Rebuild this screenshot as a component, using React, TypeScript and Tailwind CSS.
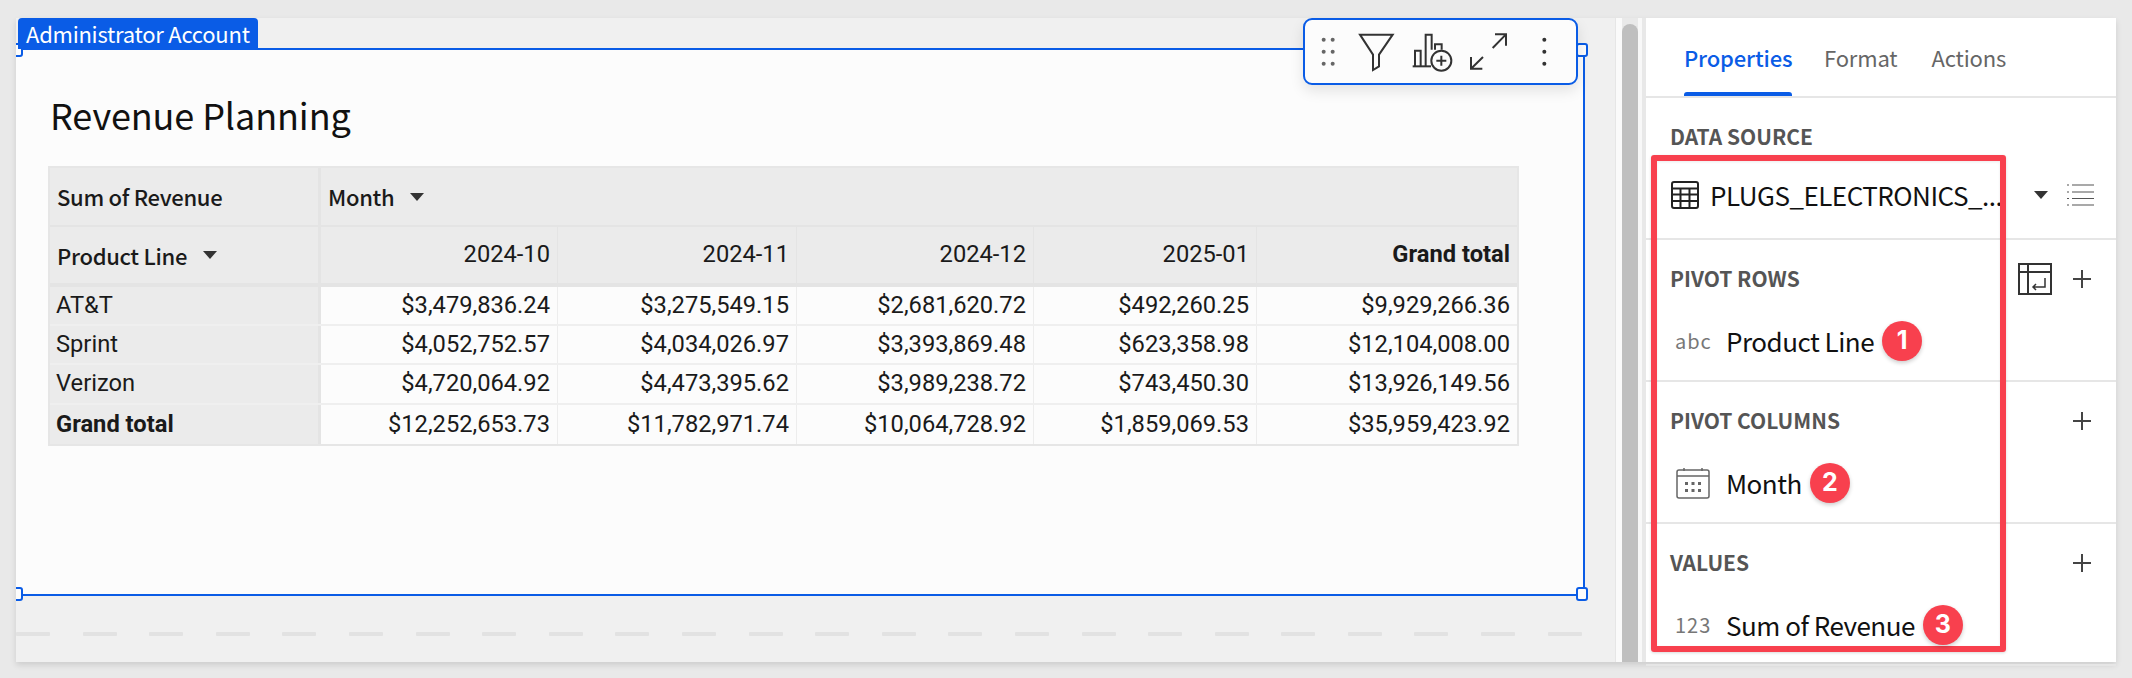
const SANS = "font-['Noto_Sans_CJK_JP',sans-serif]";

const columns = ["2024-10", "2024-11", "2024-12", "2025-01"];
const colW = ["w-[237px]", "w-[239px]", "w-[237px]", "w-[223px]"];
const rows = [
  { name: "AT&T", h: "h-[39px]", v: ["$3,479,836.24", "$3,275,549.15", "$2,681,620.72", "$492,260.25", "$9,929,266.36"] },
  { name: "Sprint", h: "h-[39px]", v: ["$4,052,752.57", "$4,034,026.97", "$3,393,869.48", "$623,358.98", "$12,104,008.00"] },
  { name: "Verizon", h: "h-[40px]", v: ["$4,720,064.92", "$4,473,395.62", "$3,989,238.72", "$743,450.30", "$13,926,149.56"] },
  { name: "Grand total", h: "h-[39px]", bold: true, v: ["$12,252,653.73", "$11,782,971.74", "$10,064,728.92", "$1,859,069.53", "$35,959,423.92"] },
];

function Caret({ className = "" }: { className?: string }) {
  return (
    <svg width="14" height="8" viewBox="0 0 14 8" className={className}>
      <path d="M0 0H14L7 8Z" fill="#333" />
    </svg>
  );
}

function Handle({ className }: { className: string }) {
  return <div className={`absolute w-[12px] h-[14px] rounded-[3px] border-2 border-[#0a5ce6] bg-[#fcfcfc] ${className}`} />;
}

function PivotTable() {
  return (
    <div className="w-[1471px] border-2 border-[#e6e6e6] font-['Roboto',sans-serif] text-[#1a1a1a]">
      <div className="flex h-[59px] bg-[#ebebeb] border-b-2 border-[#e4e4e4]">
        <div className={`${SANS} w-[271px] border-r-[3px] border-[#e4e4e4] pl-[7px] flex items-center text-[22px] tracking-[-0.3px] font-medium`}>Sum of Revenue</div>
        <div className={`${SANS} flex-1 pl-[7px] flex items-center text-[22px] tracking-[-0.3px] font-medium`}>
          Month
          <Caret className="ml-[16px]" />
        </div>
      </div>
      <div className="flex h-[60px] bg-[#ebebeb] border-b-4 border-[#e4e4e4]">
        <div className={`${SANS} w-[271px] border-r-[3px] border-[#e4e4e4] pl-[7px] flex items-center text-[22px] tracking-[-0.3px] font-medium`}>
          Product Line
          <Caret className="ml-[16px]" />
        </div>
        {columns.map((c, i) => (
          <div key={c} className={`${colW[i]} border-r border-[#e4e4e4] pr-[7px] flex items-center justify-end text-[23.7px]`}>{c}</div>
        ))}
        <div className="flex-1 pr-[7px] flex items-center justify-end text-[23.7px] font-bold">Grand total</div>
      </div>
      {rows.map((r, ri) => (
        <div key={r.name} className={`flex ${r.h} ${ri < 3 ? "border-b-2 border-[#efefef]" : ""}`}>
          <div className={`w-[271px] bg-[#ebebeb] border-r-[3px] border-[#e4e4e4] pl-[6px] flex items-center text-[23.7px] ${r.bold ? "font-bold" : ""}`}>{r.name}</div>
          {r.v.map((val, i) => (
            <div key={i} className={`${i < 4 ? colW[i] + " border-r border-[#ededed]" : "flex-1"} bg-[#fcfcfc] pr-[7px] flex items-center justify-end text-[23.7px]`}>{val}</div>
          ))}
        </div>
      ))}
    </div>
  );
}

function Toolbar() {
  return (
    <div className="absolute left-[1287px] top-0 z-10 w-[275px] h-[67px] rounded-[9px] border-2 border-[#0a5ce6] bg-[#fcfcfc] shadow-[0_6px_14px_rgba(0,0,0,0.10)]">
      <svg width="275" height="67" viewBox="68 55 825 201" className="absolute left-[-2px] top-[-2px]" fill="none">
        <g fill="#666">
          {[130, 157].map((x) => [120, 156, 192].map((y) => <circle key={`${x}${y}`} cx={x} cy={y} r="6" />))}
        </g>
        <path d="M239 105H337L296 165V200L278 211V165Z" stroke="#333" strokeWidth="6" strokeLinejoin="miter" />
        <g stroke="#333" strokeWidth="6">
          <path d="M397 200H452" />
          <path d="M404 200V153H421V200" />
          <path d="M436 200V105H454V150" />
          <path d="M464 150V134H484V150" />
          <circle cx="483" cy="183" r="30" />
          <path d="M483 168V198M468 183H498" />
        </g>
        <g stroke="#333" strokeWidth="6">
          <path d="M637 145L677 104M644 104H677V138" />
          <path d="M608 172L572 207M572 172V207H606" />
        </g>
        <g fill="#333">
          <circle cx="792" cy="120" r="6" />
          <circle cx="792" cy="156" r="6" />
          <circle cx="792" cy="192" r="6" />
        </g>
      </svg>
    </div>
  );
}

function Canvas() {
  return (
    <div className="relative w-[1599px] h-full overflow-hidden bg-[#f0f0f0]">
      <div className={`${SANS} absolute left-[2px] top-0 z-10 w-[240px] h-[31px] rounded-t-[4px] bg-[#0a5ce6] text-white text-[22px] tracking-[-0.25px] leading-[31px] pl-[8px]`}>
        Administrator Account
      </div>
      <Toolbar />
      <div className="mt-[30px] relative w-[1569px] h-[548px] border-y-2 border-r-2 border-[#0a5ce6] bg-[#fcfcfc] pl-[34px] pt-[37px]">
        <Handle className="left-[-5px] top-[-7px]" />
        <Handle className="left-[1560px] top-[-7px]" />
        <Handle className="left-[-5px] bottom-[-7px]" />
        <Handle className="left-[1560px] bottom-[-7px]" />
        <div className={`${SANS} h-[54px] text-[36px] tracking-[-0.1px] leading-[54px] text-[#111]`}>Revenue Planning</div>
        <div className="mt-[25px] -ml-[2px]">
          <PivotTable />
        </div>
      </div>
      <div className="mt-[36px] flex gap-[32.6px]">
        {Array.from({ length: 24 }).map((_, i) => (
          <div key={i} className="w-[34px] h-[4px] bg-[#e2e2e2] rounded-[1px]" />
        ))}
      </div>
    </div>
  );
}

function Plus() {
  return (
    <svg width="18" height="18" viewBox="0 0 18 18" stroke="#444" strokeWidth="2">
      <path d="M9 0V18M0 9H18" />
    </svg>
  );
}

function Badge({ n }: { n: number }) {
  return (
    <div className="relative z-20 ml-[8px] w-[40px] h-[40px] rounded-full bg-[#f8404e] text-white flex items-center justify-center font-['Inter',sans-serif] font-bold text-[25px] shadow-[0_2px_4px_rgba(0,0,0,0.2)]">
      {n}
    </div>
  );
}

function Section({ title, action, children, mt = "mt-[28px]" }: { title: string; action?: React.ReactNode; children: React.ReactNode; mt?: string }) {
  return (
    <div className="pt-[23px] pl-[24px] h-[142px] border-b-2 border-[#e6e6e6] last:border-b-0">
      <div className="flex items-center justify-between h-[30px] pr-[25px]">
        <div className={`${SANS} text-[21px] font-semibold leading-[30px] text-[#555]`}>{title}</div>
        <div className="translate-y-[1px]">{action}</div>
      </div>
      <div className={`${mt} h-[40px] flex items-center text-[#111]`}>{children}</div>
    </div>
  );
}

function TypeLabel({ children }: { children: React.ReactNode }) {
  return <div className={`${SANS} w-[56px] pl-[5px] text-[20px] text-[#777] tracking-[1px] leading-[40px]`}>{children}</div>;
}

function Label({ children }: { children: React.ReactNode }) {
  return <div className={`${SANS} text-[26px] tracking-[-0.5px] leading-[40px]`}>{children}</div>;
}

function Panel() {
  return (
    <div className="relative w-[470px] h-full bg-white">
      <div className={`${SANS} h-[80px] border-b-2 border-[#e6e6e6] flex pl-[38px] text-[22px] tracking-[-0.15px]`}>
        <div className="relative w-[108px] h-[78px] leading-[78px] font-medium text-[#0a5ce6] whitespace-nowrap">
          Properties
          <div className="absolute left-0 right-0 bottom-0 h-[4px] rounded-t-[3px] bg-[#0a5ce6]" />
        </div>
        <div className="ml-[32px] leading-[78px] text-[#666]">Format</div>
        <div className="ml-[34px] leading-[78px] text-[#666]">Actions</div>
      </div>

      <Section title="DATA SOURCE" mt="mt-[24px]" action={null}>
        <svg width="28" height="28" viewBox="0 0 28 28" fill="none" stroke="#222" strokeWidth="2" className="shrink-0 ml-[1px]">
          <rect x="1" y="1" width="26" height="26" rx="2" />
          <path d="M1 7.500H27M1 13.500H27M1 20H27M9.500 7.500V27M18.500 7.500V27" />
        </svg>
        <div className={`${SANS} ml-[11px] w-[296px] shrink-0 whitespace-nowrap text-[26px] tracking-[-0.5px] leading-[40px]`}>PLUGS_ELECTRONICS_...</div>
        <Caret className="ml-[28px] shrink-0" />
        <svg width="27" height="22" viewBox="0 0 27 22" stroke="#555" strokeWidth="1.2" className="ml-[19px] shrink-0">
          <path d="M5 1H27M5 8H27M5 14.500H27M5 21H27M0 1H2M0 8H2M0 14.500H2M0 21H2" />
        </svg>
      </Section>

      <Section
        title="PIVOT ROWS"
        action={
          <div className="flex items-center gap-[21px]">
            <svg width="34" height="32" viewBox="0 0 34 32" fill="none" stroke="#333" strokeWidth="2">
              <rect x="1" y="1" width="32" height="30" />
              <path d="M1 9H33M10 1V31" />
              <path d="M27 15V24H15M18 21L15 24L18 27" strokeWidth="1.500" />
            </svg>
            <Plus />
          </div>
        }
      >
        <TypeLabel>abc</TypeLabel>
        <Label>Product Line</Label>
        <Badge n={1} />
      </Section>

      <Section title="PIVOT COLUMNS" action={<Plus />}>
        <div className="w-[56px] pl-[6px] shrink-0">
          <svg width="34" height="32" viewBox="0 0 34 32" fill="none" stroke="#666" strokeWidth="1.500">
            <rect x="1" y="3" width="32" height="28" rx="2" />
            <path d="M1 9H33M8 1V4M26 1V4" />
            <g fill="#666" stroke="none">
              {[9, 15.5, 22].map((x) => [15, 22].map((y) => <rect key={`${x}${y}`} x={x} y={y} width="3" height="3" />))}
            </g>
          </svg>
        </div>
        <Label>Month</Label>
        <Badge n={2} />
      </Section>

      <Section title="VALUES" action={<Plus />}>
        <TypeLabel>123</TypeLabel>
        <Label>Sum of Revenue</Label>
        <Badge n={3} />
      </Section>

      <div className="absolute left-[5px] top-[137px] z-10 w-[355px] h-[497px] rounded-[3px] border-[6px] border-[#f8404e] pointer-events-none shadow-[0_1px_3px_rgba(0,0,0,0.15),inset_0_1px_3px_rgba(0,0,0,0.08)]" />
    </div>
  );
}

export default function App() {
  return (
    <div className="w-[2132px] h-[678px] overflow-hidden bg-[#e9e9e9] pt-[18px] pl-[16px]">
      <div className="flex h-[644px] w-[2100px] shadow-[0_3px_6px_rgba(0,0,0,0.12)]">
        <Canvas />
        <div className="w-[7px] bg-[#fafafa] border-l border-[#e6e6e6]" />
        <div className="w-[16px] rounded-t-[8px] mt-[6px] bg-[#bfbfbf]" />
        <div className="w-[4px] bg-[#f8f8f8]" />
        <div className="w-[4px] bg-[#e8e8e8]" />
        <Panel />
      </div>
    </div>
  );
}
